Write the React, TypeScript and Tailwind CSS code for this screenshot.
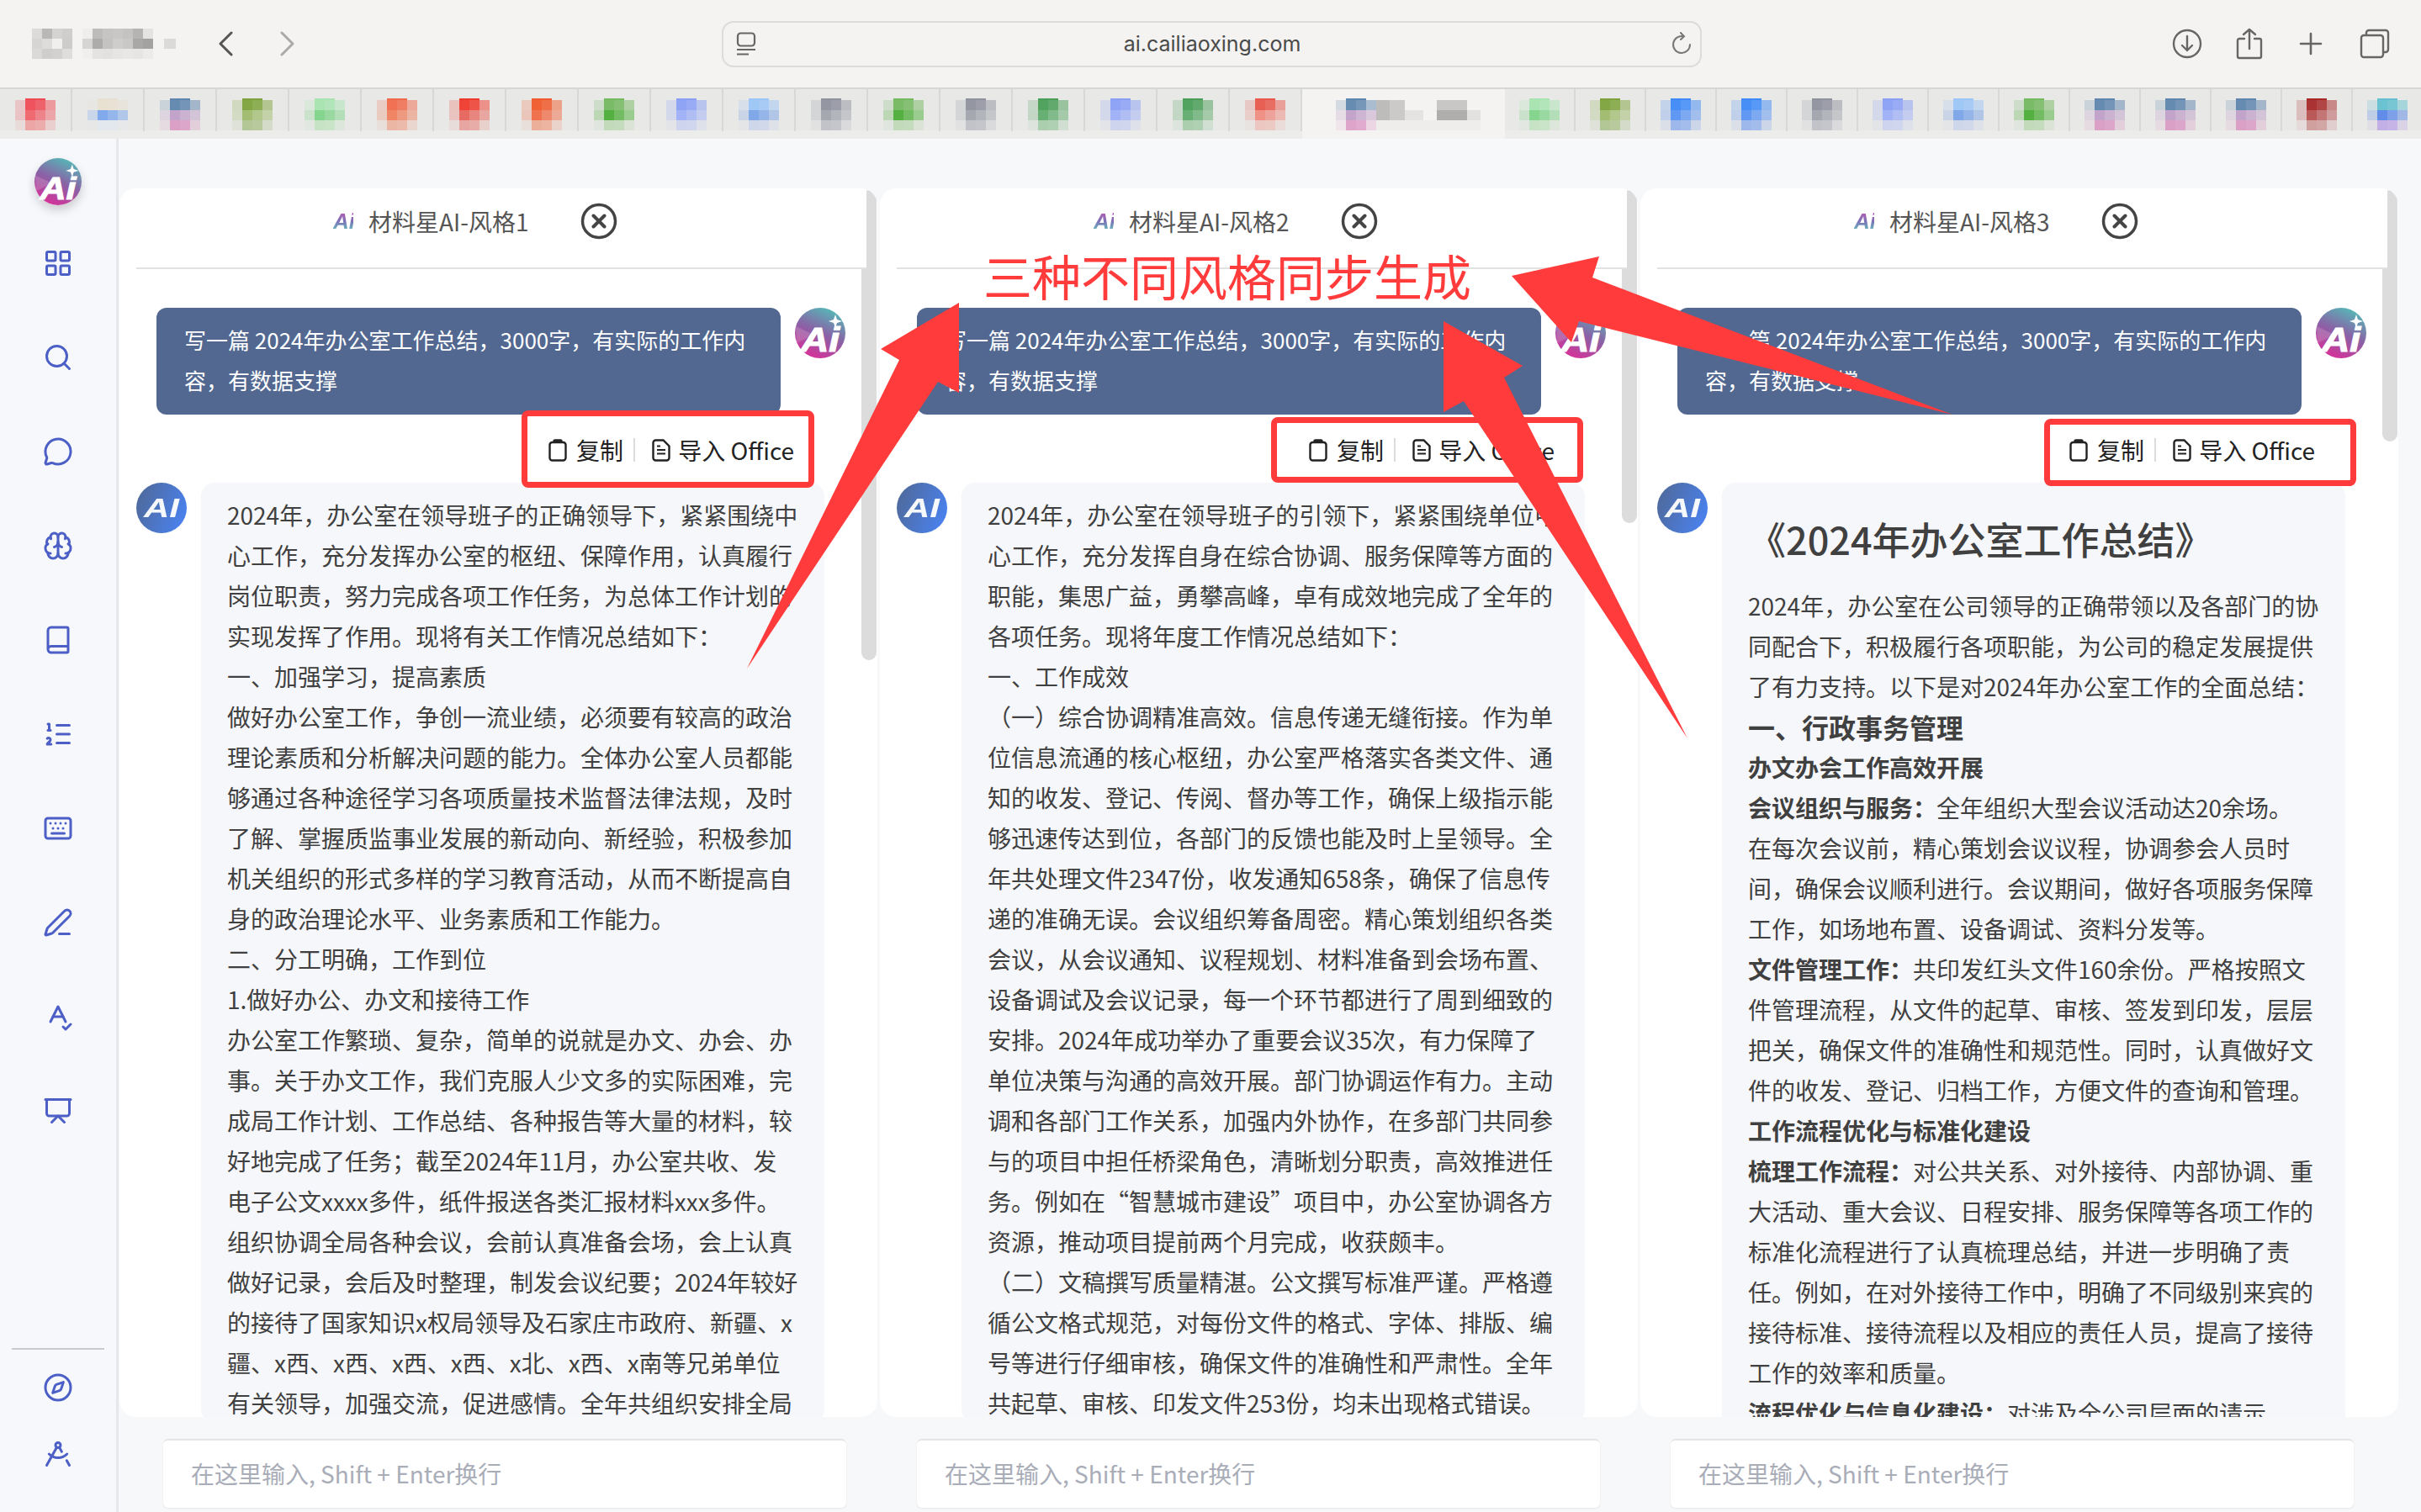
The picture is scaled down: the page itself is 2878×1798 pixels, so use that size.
import { useId } from "react";
import type { ReactNode } from "react";
import {
  Book,
  Brain,
  Compass,
  DraftingCompass,
  Keyboard,
  LayoutGrid,
  ListOrdered,
  MessageCircle,
  PenLine,
  Presentation,
  Search,
  SpellCheck,
} from "lucide-react";

// blurred tab favicons: [top, middle, bottom]
type Fav = [string, string, string];
const RED: Fav = ["#ef4b55", "#f0636c", "#ee7a7a"];
const BLUE_PALE: Fav = ["#e8dfd0", "#7aa6ec", "#dfe6f4"];
const MULTI: Fav = ["#5f86ae", "#c0a0c8", "#d070b0"];
const OLIVE: Fav = ["#7ea33c", "#9fbc6c", "#8fb060"];
const MINT: Fav = ["#a8e4b0", "#7fd48a", "#b0e0b0"];
const ORANGE: Fav = ["#f06a4c", "#f0805f", "#ee9478"];
const RED2: Fav = ["#ee3a2c", "#e8645c", "#e87a74"];
const ORANGE2: Fav = ["#f05a2c", "#f06a44", "#ee8868"];
const GREEN: Fav = ["#74b860", "#4cae38", "#a8d09c"];
const PERI: Fav = ["#8aa0f6", "#9fb0f8", "#bcc6f4"];
const SKY: Fav = ["#9cc6f8", "#7aa4e8", "#bccbec"];
const GREY: Fav = ["#8f919e", "#a2a4ae", "#a8aab4"];
const GREEN2: Fav = ["#4a9e58", "#60ac6c", "#80bc88"];
const SALMON: Fav = ["#e8584c", "#f08c80", "#eeb0a8"];
const BLUE: Fav = ["#3e8af8", "#5a94f4", "#6c98ee"];
const MAROON: Fav = ["#a82828", "#b85050", "#c07070"];
const TEAL: Fav = ["#64c0d0", "#5a88e8", "#a888e4"];

const TABS_LEFT: Fav[] = [RED, BLUE_PALE, MULTI, OLIVE, MINT, ORANGE, RED2, ORANGE2, GREEN, PERI, SKY, GREY, GREEN, GREY, GREEN2, PERI, GREEN2, SALMON];
const TABS_RIGHT: Fav[] = [MINT, OLIVE, BLUE, BLUE, GREY, PERI, SKY, GREEN, MULTI, MULTI, MULTI, MAROON, TEAL];

const FAV_ALPHA = [
  [0.22, 0.95, 0.85, 0.5],
  [0.28, 0.95, 0.75, 0.5],
  [0.1, 0.6, 0.55, 0.22],
];

function Favicon({ c }: { c: Fav }) {
  return (
    <svg width="48" height="38" viewBox="0 0 48 38" className="shrink-0">
      <rect x="12" y="0" width="24" height="2" fill={c[0]} />
      {FAV_ALPHA.map((row, r) =>
        row.map((a, k) => (
          <rect key={`${r}-${k}`} x={k * 12} y={2 + r * 12} width="12" height="12" fill={c[r]} opacity={a} />
        )),
      )}
    </svg>
  );
}

function BlurredTitle() {
  const a = ["#dcdbd9", "#b9b8b6", "#d4d3d1", "#cfcecc", "#d6d5d3", "#dddcda", "#f0efed", "#cdccca", "#dad9d7", "#cfcecc", "#d2d1cf", "#dedddb"];
  const b = ["#efeeec", "#bdbcba", "#c6c5c3", "#c8c7c5", "#c4c3c1", "#b5b4b2", "#e4e3e1", "#d6d5d3", "#adacaa", "#c4c3c1", "#cecdcb", "#c9c8c6", "#a9a8a6", "#a3a2a0", "#f0efed", "#e4e3e1", "#e2e1df", "#e6e5e3", "#e8e7e5", "#e6e5e3", "#ecebe9"];
  return (
    <svg width="171" height="36" viewBox="0 0 171 36" className="shrink-0">
      {a.map((f, i) => (
        <rect key={i} x={(i % 4) * 12} y={Math.floor(i / 4) * 12} width="12" height="12" fill={f} />
      ))}
      {b.map((f, i) => (
        <rect key={i} x={60 + (i % 7) * 12} y={Math.floor(i / 7) * 12} width="12" height="12" fill={f} />
      ))}
      <rect x="157" y="12" width="14" height="12" fill="#dbdad8" />
    </svg>
  );
}

function BlurredTabTitle() {
  return (
    <svg width="124" height="38" viewBox="0 0 124 38" className="shrink-0">
      <rect x="0" y="2" width="16" height="24" fill="#bdbcba" />
      <rect x="16" y="2" width="18" height="24" fill="#cbcac8" />
      <rect x="34" y="14" width="22" height="12" fill="#e4e3e1" />
      <rect x="0" y="26" width="124" height="12" fill="#eeedeb" />
      <rect x="72" y="2" width="36" height="12" fill="#c8c7c5" />
      <rect x="72" y="14" width="36" height="12" fill="#afaeac" />
      <rect x="108" y="14" width="16" height="12" fill="#e2e1df" />
    </svg>
  );
}

function LogoAi({ size }: { size: number }) {
  const id = useId();
  return (
    <svg width={size} height={size} viewBox="0 0 60 60" className="shrink-0">
      <defs>
        <linearGradient id={id} x1="0.75" y1="0" x2="0.3" y2="1">
          <stop offset="0" stopColor="#52bdb8" />
          <stop offset="0.5" stopColor="#8a62a6" />
          <stop offset="1" stopColor="#d92f98" />
        </linearGradient>
      </defs>
      <circle cx="30" cy="30" r="30" fill={`url(#${id})`} />
      <polygon points="1,22 22,32 2,42" fill="#fff" opacity="0.16" />
      <text x="7" y="52" textLength="46" lengthAdjust="spacingAndGlyphs" fontFamily="Liberation Sans, sans-serif" fontWeight="700" fontStyle="italic" fontSize="40" fill="#fff" stroke="#fff" strokeWidth="1.2">
        Ai
      </text>
      <path d="M48 8l2 6 6 2-6 2-2 6-2-6-6-2 6-2z" fill="#fff" />
    </svg>
  );
}

function AvatarAi() {
  const id = useId();
  return (
    <svg width="60" height="60" viewBox="0 0 60 60" className="shrink-0">
      <defs>
        <linearGradient id={id} x1="0" y1="0.3" x2="1" y2="0.7">
          <stop offset="0" stopColor="#4f6a9c" />
          <stop offset="1" stopColor="#4a82f0" />
        </linearGradient>
      </defs>
      <circle cx="30" cy="30" r="30" fill={`url(#${id})`} />
      <text x="9" y="41" textLength="42" lengthAdjust="spacingAndGlyphs" fontFamily="Liberation Sans, sans-serif" fontWeight="700" fontStyle="italic" fontSize="31" fill="#fff" opacity="0.95">
        AI
      </text>
    </svg>
  );
}

function CloseIcon() {
  return (
    <svg width="44" height="44" viewBox="0 0 44 44" fill="none" stroke="#444" className="shrink-0">
      <circle cx="22" cy="22" r="19.5" strokeWidth="3.5" />
      <path d="M15.5 15.5l13 13M28.5 15.5l-13 13" strokeWidth="4" strokeLinecap="round" />
    </svg>
  );
}

function ClipIcon() {
  return (
    <svg width="22" height="27" viewBox="0 0 22 27" fill="none" stroke="#222" strokeWidth="2.4" className="shrink-0">
      <rect x="1.5" y="4" width="19" height="21.5" rx="3" />
      <path d="M6.5 5V2.6c0-.6.5-1.2 1.2-1.2h6.6c.7 0 1.2.6 1.2 1.2V5" fill="#222" />
    </svg>
  );
}

function DocIcon() {
  return (
    <svg width="22" height="27" viewBox="0 0 22 27" fill="none" stroke="#222" strokeWidth="2.4" className="shrink-0">
      <path d="M13.5 1.5H4.5a3 3 0 0 0-3 3v18a3 3 0 0 0 3 3h13a3 3 0 0 0 3-3V8.5z" />
      <path d="M6 13h10M6 17.5h10M6 8.5h4" strokeWidth="2" />
    </svg>
  );
}

const USER_LINES = ["写一篇 2024年办公室工作总结，3000字，有实际的工作内", "容，有数据支撑"];

const LINES_1 = [
  "2024年，办公室在领导班子的正确领导下，紧紧围绕中",
  "心工作，充分发挥办公室的枢纽、保障作用，认真履行",
  "岗位职责，努力完成各项工作任务，为总体工作计划的",
  "实现发挥了作用。现将有关工作情况总结如下：",
  "一、加强学习，提高素质",
  "做好办公室工作，争创一流业绩，必须要有较高的政治",
  "理论素质和分析解决问题的能力。全体办公室人员都能",
  "够通过各种途径学习各项质量技术监督法律法规，及时",
  "了解、掌握质监事业发展的新动向、新经验，积极参加",
  "机关组织的形式多样的学习教育活动，从而不断提高自",
  "身的政治理论水平、业务素质和工作能力。",
  "二、分工明确，工作到位",
  "1.做好办公、办文和接待工作",
  "办公室工作繁琐、复杂，简单的说就是办文、办会、办",
  "事。关于办文工作，我们克服人少文多的实际困难，完",
  "成局工作计划、工作总结、各种报告等大量的材料，较",
  "好地完成了任务；截至2024年11月，办公室共收、发",
  "电子公文xxxx多件，纸件报送各类汇报材料xxx多件。",
  "组织协调全局各种会议，会前认真准备会场，会上认真",
  "做好记录，会后及时整理，制发会议纪要；2024年较好",
  "的接待了国家知识x权局领导及石家庄市政府、新疆、x",
  "疆、x西、x西、x西、x西、x北、x西、x南等兄弟单位",
  "有关领导，加强交流，促进感情。全年共组织安排全局",
];

const LINES_2 = [
  "2024年，办公室在领导班子的引领下，紧紧围绕单位中",
  "心工作，充分发挥自身在综合协调、服务保障等方面的",
  "职能，集思广益，勇攀高峰，卓有成效地完成了全年的",
  "各项任务。现将年度工作情况总结如下：",
  "一、工作成效",
  "（一）综合协调精准高效。信息传递无缝衔接。作为单",
  "位信息流通的核心枢纽，办公室严格落实各类文件、通",
  "知的收发、登记、传阅、督办等工作，确保上级指示能",
  "够迅速传达到位，各部门的反馈也能及时上呈领导。全",
  "年共处理文件2347份，收发通知658条，确保了信息传",
  "递的准确无误。会议组织筹备周密。精心策划组织各类",
  "会议，从会议通知、议程规划、材料准备到会场布置、",
  "设备调试及会议记录，每一个环节都进行了周到细致的",
  "安排。2024年成功举办了重要会议35次，有力保障了",
  "单位决策与沟通的高效开展。部门协调运作有力。主动",
  "调和各部门工作关系，加强内外协作，在多部门共同参",
  "与的项目中担任桥梁角色，清晰划分职责，高效推进任",
  "务。例如在“智慧城市建设”项目中，办公室协调各方",
  "资源，推动项目提前两个月完成，收获颇丰。",
  "（二）文稿撰写质量精湛。公文撰写标准严谨。严格遵",
  "循公文格式规范，对每份文件的格式、字体、排版、编",
  "号等进行仔细审核，确保文件的准确性和严肃性。全年",
  "共起草、审核、印发文件253份，均未出现格式错误。",
];

function Line({ children }: { children: ReactNode }) {
  return <div className="h-[48px] whitespace-nowrap leading-[48px]">{children}</div>;
}

function Style3() {
  return (
    <>
      <h1 className="mb-[23px] whitespace-nowrap pt-[21px] text-[45px] font-medium leading-[64px]">《2024年办公室工作总结》</h1>
      <Line>2024年，办公室在公司领导的正确带领以及各部门的协</Line>
      <Line>同配合下，积极履行各项职能，为公司的稳定发展提供</Line>
      <Line>了有力支持。以下是对2024年办公室工作的全面总结：</Line>
      <Line><b className="text-[32px] font-semibold">一、行政事务管理</b></Line>
      <Line><b className="font-semibold">办文办会工作高效开展</b></Line>
      <Line><b className="font-semibold">会议组织与服务：</b>全年组织大型会议活动达20余场。</Line>
      <Line>在每次会议前，精心策划会议议程，协调参会人员时</Line>
      <Line>间，确保会议顺利进行。会议期间，做好各项服务保障</Line>
      <Line>工作，如场地布置、设备调试、资料分发等。</Line>
      <Line><b className="font-semibold">文件管理工作：</b>共印发红头文件160余份。严格按照文</Line>
      <Line>件管理流程，从文件的起草、审核、签发到印发，层层</Line>
      <Line>把关，确保文件的准确性和规范性。同时，认真做好文</Line>
      <Line>件的收发、登记、归档工作，方便文件的查询和管理。</Line>
      <Line><b className="font-semibold">工作流程优化与标准化建设</b></Line>
      <Line><b className="font-semibold">梳理工作流程：</b>对公共关系、对外接待、内部协调、重</Line>
      <Line>大活动、重大会议、日程安排、服务保障等各项工作的</Line>
      <Line>标准化流程进行了认真梳理总结，并进一步明确了责</Line>
      <Line>任。例如，在对外接待工作中，明确了不同级别来宾的</Line>
      <Line>接待标准、接待流程以及相应的责任人员，提高了接待</Line>
      <Line>工作的效率和质量。</Line>
      <Line><b className="font-semibold">流程优化与信息化建设：</b>对涉及全公司层面的请示</Line>
    </>
  );
}

function Panel({ title, thumb, children }: { title: string; thumb: string; children: ReactNode }) {
  return (
    <section className="relative isolate h-[1461px] w-[901px] shrink-0 overflow-hidden rounded-[20px] bg-white">
      <div className={`absolute right-[1px] top-[2px] w-[18px] rounded-[9px] bg-[#dcdcdc] ${thumb}`} />
      <header className="relative z-10 w-[888px] bg-white">
        <div className="flex h-[94px] items-center pb-[16px] pl-[254px]">
          <span className="mr-[18px] w-[24px] bg-gradient-to-t from-[#55c8b8] via-[#7a70b8] to-[#c050b0] bg-clip-text font-['Liberation_Sans',sans-serif] text-[26px] font-bold italic leading-none text-transparent">
            Ai
          </span>
          <span className="w-[188px] whitespace-nowrap text-[28px] leading-[40px] text-[#555]">{title}</span>
          <span className="ml-[64px]">
            <CloseIcon />
          </span>
        </div>
        <div className="ml-[20px] h-[2px] bg-[#e2e2e2]" />
      </header>

      <div className="mt-[46px] flex pl-[44px]">
        <div className="h-[127px] w-[742px] rounded-[12px] bg-[#526890] px-[33px] pt-[14px] text-[26px] text-white">
          {USER_LINES.map((l) => (
            <Line key={l}>{l}</Line>
          ))}
        </div>
        <div className="ml-[17px]">
          <LogoAi size={60} />
        </div>
      </div>

      <div className="flex h-[81px] w-[802px] items-center justify-end pt-[3px] text-[28px] text-[#222]">
        <ClipIcon />
        <span className="ml-[11px] leading-[40px]">复制</span>
        <span className="ml-[12px] mr-[20px] h-[28px] w-[2px] bg-[#dcdcdc]" />
        <DocIcon />
        <span className="ml-[9px] whitespace-nowrap leading-[40px]">导入 Office</span>
      </div>

      <div className="flex pl-[20px]">
        <AvatarAi />
        <div className="ml-[17px] w-[741px] rounded-[16px] bg-[#f6f7fb] px-[31px] pt-[14px] text-[28px] text-[#404040]">
          {children}
        </div>
      </div>
    </section>
  );
}

function InputBox() {
  return (
    <div className="flex h-[82px] w-[812px] items-center rounded-[6px] border-t-[2px] border-[#e4e4e6] bg-white pb-[2px] pl-[33px] text-[28px] text-[#a9adb8] shadow-[0_1px_2px_rgba(0,0,0,0.08)]">
      在这里输入, Shift + Enter换行
    </div>
  );
}

const NAV = [LayoutGrid, Search, MessageCircle, Brain, Book, ListOrdered, Keyboard, PenLine, SpellCheck, Presentation];

export default function App() {
  return (
    <div className="relative h-[1798px] w-[2878px] overflow-hidden bg-[#f7f8fa] font-['Noto_Sans_CJK_SC','Noto_Sans',sans-serif]">
      {/* browser toolbar */}
      <div className="flex h-[104px] items-center bg-[#f4f3f1] pl-[38px]">
        <BlurredTitle />
        <svg width="18" height="30" viewBox="0 0 18 30" fill="none" stroke="#555" strokeWidth="3" strokeLinecap="round" strokeLinejoin="round" className="ml-[50px]">
          <path d="M16 2L3 15l13 13" />
        </svg>
        <svg width="18" height="30" viewBox="0 0 18 30" fill="none" stroke="#aaa" strokeWidth="3" strokeLinecap="round" strokeLinejoin="round" className="ml-[56px]">
          <path d="M2 2l13 13L2 28" />
        </svg>
        <div className="ml-[507px] flex h-[55px] w-[1165px] items-center justify-between rounded-[14px] border-2 border-[#dcdbd9] bg-[#f4f3f1] pl-[15px] pr-[10px]">
          <svg width="24" height="28" viewBox="0 0 24 28" fill="none" stroke="#666" strokeWidth="2.2">
            <rect x="2" y="1.5" width="20" height="15" rx="3.5" />
            <path d="M1 21h22M1 26.5h14" />
          </svg>
          <span className="mr-[4px] font-['Inter',sans-serif] text-[25px] leading-[36px] text-[#4a4a4a]">ai.cailiaoxing.com</span>
          <svg width="24" height="28" viewBox="0 0 24 28" fill="none" stroke="#777" strokeWidth="2" strokeLinecap="round">
            <path d="M14 5.2A10 10 0 1 0 22 15" />
            <path d="M11 1l4 4.2-4 3.8" />
          </svg>
        </div>
        <svg width="36" height="36" viewBox="0 0 36 36" fill="none" stroke="#666" strokeWidth="2.4" strokeLinecap="round" strokeLinejoin="round" className="ml-[559px]">
          <circle cx="18" cy="18" r="16" />
          <path d="M18 9v17M12 20l6 6 6-6" />
        </svg>
        <svg width="32" height="38" viewBox="0 0 32 38" fill="none" stroke="#666" strokeWidth="2.4" strokeLinecap="round" strokeLinejoin="round" className="ml-[40px]">
          <path d="M10 13H4a2 2 0 0 0-2 2v19a2 2 0 0 0 2 2h24a2 2 0 0 0 2-2V15a2 2 0 0 0-2-2h-6" />
          <path d="M16 25V2M9 8l7-6 7 6" />
        </svg>
        <svg width="28" height="28" viewBox="0 0 28 28" fill="none" stroke="#666" strokeWidth="2.6" strokeLinecap="round" className="ml-[43px]">
          <path d="M14 2v24M2 14h24" />
        </svg>
        <svg width="36" height="36" viewBox="0 0 36 36" fill="none" stroke="#666" strokeWidth="2.4" strokeLinejoin="round" className="ml-[44px]">
          <path d="M8 8V5a3 3 0 0 1 3-3h20a3 3 0 0 1 3 3v20a3 3 0 0 1-3 3h-3" />
          <rect x="2" y="8" width="26" height="26" rx="3" />
        </svg>
      </div>

      {/* tab strip */}
      <div className="flex h-[61px] overflow-hidden border-t-2 border-[#d6d6d4] bg-[#e8e8e7] shadow-[inset_0_-10px_0_#ececeb]">
        {TABS_LEFT.map((c, i) => (
          <div key={i} className="flex h-[50px] w-[86px] shrink-0 justify-center border-r-2 border-[#d8d8d6] pt-[11px]">
            <Favicon c={c} />
          </div>
        ))}
        <div className="flex h-[60px] w-[241px] shrink-0 items-start bg-[#f4f3f1] pl-[40px] pt-[11px]">
          <Favicon c={MULTI} />
          <BlurredTabTitle />
        </div>
        {TABS_RIGHT.map((c, i) => (
          <div key={i} className="flex h-[50px] w-[84px] shrink-0 justify-center border-r-2 border-[#d8d8d6] pt-[11px]">
            <Favicon c={c} />
          </div>
        ))}
      </div>

      <div className="flex h-[1633px]">
        {/* sidebar */}
        <aside className="flex w-[141px] shrink-0 flex-col items-center border-r-[3px] border-[#e6e7eb] bg-[#f7f8fb] pt-[23px]">
          <div className="rounded-full shadow-[0_6px_12px_rgba(0,0,0,0.18)]">
            <LogoAi size={56} />
          </div>
          <nav className="mt-[13px] flex flex-col items-center">
            {NAV.map((Icon, i) => (
              <div key={i} className="flex h-[112px] items-center justify-center">
                <Icon size={36} strokeWidth={2} className="text-[#4c5fc6]" />
              </div>
            ))}
          </nav>
          <div className="mt-auto h-[2px] w-[110px] bg-[#c9cacd]" />
          <div className="mb-[30px] mt-[5px] flex flex-col items-center">
            <div className="flex h-[79px] items-center">
              <Compass size={36} strokeWidth={2} className="text-[#4c5fc6]" />
            </div>
            <div className="flex h-[79px] items-center">
              <DraftingCompass size={36} strokeWidth={2} className="text-[#4c5fc6]" />
            </div>
          </div>
        </aside>

        <main className="flex min-w-0 flex-1 flex-col pt-[59px]">
          <div className="flex gap-[3px] pl-[1px]">
            <Panel title="材料星AI-风格1" thumb="h-[559px]">
              {LINES_1.map((l) => (
                <Line key={l}>{l}</Line>
              ))}
            </Panel>
            <Panel title="材料星AI-风格2" thumb="h-[396px]">
              {LINES_2.map((l) => (
                <Line key={l}>{l}</Line>
              ))}
            </Panel>
            <Panel title="材料星AI-风格3" thumb="h-[299px]">
              <Style3 />
            </Panel>
          </div>
          <div className="mt-[26px] flex gap-[84px] pl-[53px]">
            <InputBox />
            <InputBox />
            <InputBox />
          </div>
        </main>
      </div>

      {/* annotations painted over the screenshot */}
      <div className="absolute left-[620px] top-[488px] h-[92px] w-[348px] rounded-[8px] border-[7px] border-[#ff3b3b]" />
      <div className="absolute left-[1511px] top-[496px] h-[78px] w-[371px] rounded-[8px] border-[7px] border-[#ff3b3b]" />
      <div className="absolute left-[2430px] top-[498px] h-[80px] w-[371px] rounded-[8px] border-[7px] border-[#ff3b3b]" />
      <div className="absolute left-[1169px] top-[286px] whitespace-nowrap text-[58px] leading-[82px] text-[#ff3b3b]">三种不同风格同步生成</div>
      <svg className="pointer-events-none absolute left-0 top-0" width="2878" height="1798" viewBox="0 0 2878 1798" fill="#ff3b3b">
        <polygon points="1140,360 1047,415 1069,428 888,795 1115,454 1140,467" />
        <polygon points="1716,382 1810,435 1788,449 2006,878 1740,477 1716,490" />
        <polygon points="1797,328 1901,305 1893,330 2321,493 1877,382 1868,407" />
      </svg>
    </div>
  );
}
